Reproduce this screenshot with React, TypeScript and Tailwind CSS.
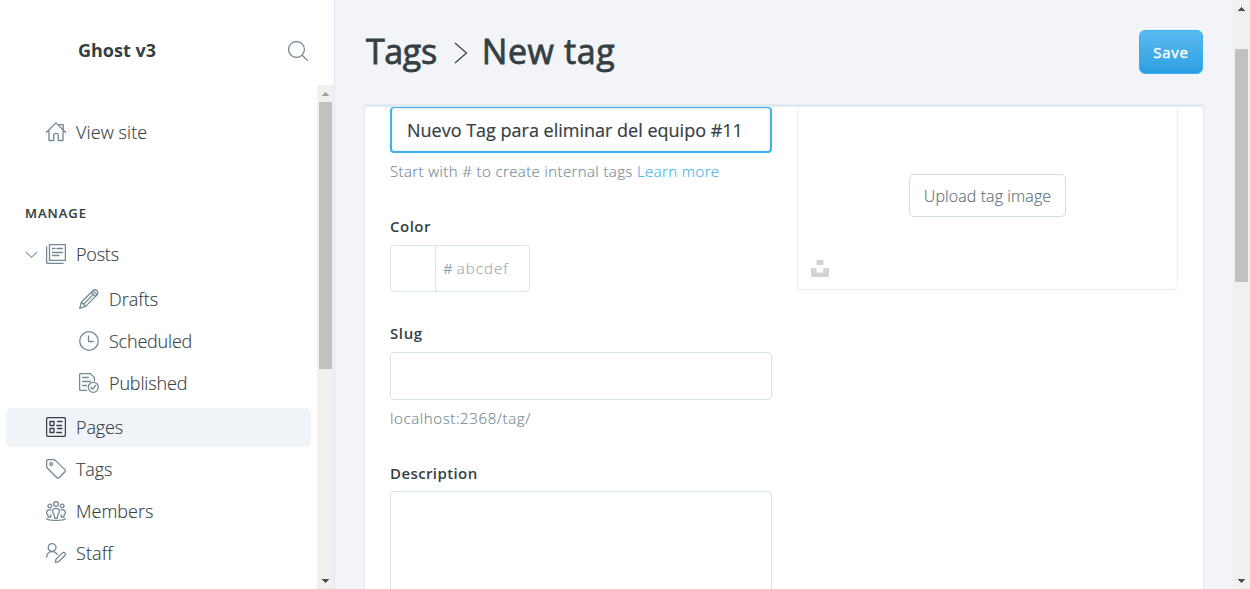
import type { ReactNode } from "react";

function Icon({ children, className = "text-[#738a94]" }: { children: ReactNode; className?: string }) {
  return (
    <svg
      viewBox="0 0 20 20"
      className={`h-5 w-5 shrink-0 fill-none stroke-[1.3] ${className}`}
      stroke="currentColor"
      strokeLinecap="round"
      strokeLinejoin="round"
    >
      {children}
    </svg>
  );
}

const HomeIcon = () => (
  <Icon>
    <path d="M.5 10.3 10 .9l9.5 9.4M3 9v9.5h4.7v-5.2c0-1.3.9-2 2.3-2s2.3.7 2.3 2v5.2H17V9M13.3 2.600h3.900v5" />
  </Icon>
);
const PostsIcon = () => (
  <Icon>
    <path d="M3.5.6h15.9v15.8H3.5zM.6 2.8v15.5c0 .7.4 1.1 1.1 1.1H17M6.5 4.500H9M11 4.500h5.500M6.500 8.500h10M6.500 11.500h6.500" />
  </Icon>
);
const PencilIcon = () => (
  <Icon>
    <path d="m.7 19.3 1.6-6L13.8 1.8c1.6-1.6 3-1.2 4.1-.1s1.5 2.6.1 4.2L6.6 17.4zM2.3 13.3l4.3 4.1M12.4 3.2l4.3 4.3M4.4 15.4 14.5 5.3M14 1.6l4.4 4.2" />
  </Icon>
);
const ClockIcon = () => (
  <Icon>
    <circle cx="10" cy="10" r="9.3" />
    <path d="M9.500 4.8v5.700h4.800" />
  </Icon>
);
const PublishedIcon = () => (
  <Icon>
    <path d="M7.6 17.4H1.7c-.7 0-1.1-.4-1.1-1.1V1.7C.6 1 1 .6 1.7.6h9.7l4 4v3.2M3.7 4.500h5.600M3.7 8.500h7.800M3.7 12.500h3.900" />
    <circle cx="14.3" cy="14.3" r="5" />
    <path d="m11.9 14.5 1.7 1.7 3-3.7" />
  </Icon>
);
const PagesIcon = () => (
  <Icon className="text-[#394047]">
    <path d="M.6 2.2C.6 1.2 1.2.6 2.2.6h15.6c1 0 1.6.6 1.6 1.6v15.6c0 1-.6 1.6-1.6 1.6H2.2c-1 0-1.6-.6-1.6-1.6zM4 4.5h4v4H4zM4 11.5h4v4H4zM11.500 4.5H16M10.8 8.500H15.500M11.500 11.500H16M10.8 15.5H15.500" />
  </Icon>
);
const TagIcon = () => (
  <Icon>
    <path d="M.6 2.2C.6 1.2 1.2.6 2.2.6h5.1c.8 0 1.4.3 2 .8l9.4 9c.9.9.9 1.8 0 2.6l-5.4 5.5c-.9.8-1.8.8-2.6 0L1.4 9.2c-.5-.6-.8-1.2-.8-2z" />
    <circle cx="5.2" cy="5.1" r="1.4" />
  </Icon>
);
const MembersIcon = () => (
  <Icon>
    <circle cx="10" cy="2.9" r="2.4" />
    <circle cx="3.8" cy="4.9" r="1.8" />
    <circle cx="16.2" cy="4.9" r="1.8" />
    <path d="M8.5 17 8 13c-1-.4-1.3-1.2-1.3-2.5 0-2 1.3-3.2 3.3-3.2s3.3 1.2 3.3 3.2c0 1.3-.3 2.1-1.3 2.5l-.5 4zM5.3 8.9c-2.5-.8-4.7.3-4.7 2.800 0 1.100.4 1.700 1.100 2l.5 2.300h2.300l.5-2.300M14.700 8.900c2.500-.8 4.700.3 4.700 2.800 0 1.100-.4 1.700-1.100 2l-.5 2.300h-2.300l-.5-2.300M.5 17.700c1.500 1.100 5 1.700 9.500 1.700s8-.6 9.500-1.700" />
  </Icon>
);
const StaffIcon = () => (
  <Icon>
    <circle cx="6.1" cy="4.5" r="3.9" />
    <path d="M.6 14.3c.2-3.5 2.5-5.6 5.6-5.6 2.2 0 3.9 1 4.9 2.7M9.3 19.3l.7-3.1 6.1-6.1c1-1 2-.9 2.8-.2s.8 1.800-.2 2.800l-6.300 6.100z" />
  </Icon>
);

function Arrow({ up = false, muted = false }: { up?: boolean; muted?: boolean }) {
  return (
    <div className="flex h-[17px] shrink-0 items-center justify-center">
      <svg width="7" height="4" className={muted ? "fill-[#a3a3a3]" : "fill-[#505050]"} shapeRendering="crispEdges">
        <path d={up ? "M3 0h1v1h1v1h1v1h1v1H0V3h1V2h1V1h1z" : "M0 0h7v1H6v1H5v1H4v1H3V3H2V2H1V1H0z"} />
      </svg>
    </div>
  );
}

function NavItem({ icon, label, track = "", active = false, open = false }: { icon: ReactNode; label: string; track?: string; active?: boolean; open?: boolean }) {
  return (
    <div className={`flex h-[39px] items-center rounded-[5px] pl-[19px] ${active ? "bg-[#f0f4f9]" : ""}`}>
      <div className="w-[21px]">
        {open && (
          <svg width="13" height="8" viewBox="0 0 13 8" className="fill-none stroke-[#8ea2ab] stroke-[1.2]">
            <path d="m1 1 5.500 5.500L12 1" />
          </svg>
        )}
      </div>
      <div className="-mt-px">{icon}</div>
      <span className={`ml-[10px] ${track}`}>{label}</span>
    </div>
  );
}

function SubItem({ icon, label, track = "" }: { icon: ReactNode; label: string; track?: string }) {
  return (
    <div className="flex h-[42px] items-center pl-[73px]">
      {icon}
      <span className={`ml-[10px] ${track}`}>{label}</span>
    </div>
  );
}

function Sidebar() {
  return (
    <aside className="flex h-full w-[335px] shrink-0 flex-col border-r border-[#e3e8f0] bg-white">
      <div className="flex h-[85px] shrink-0 items-start justify-between pt-[37px] pr-[26px] pl-[78px]">
        <span className="text-[18px] leading-[26px] font-bold">Ghost v3</span>
        <Icon className="mt-[4px] text-[#738a94]">
          <circle cx="8.5" cy="8.500" r="7.900" />
          <path d="m14.200 14.200 5.200 5.200" />
        </Icon>
      </div>
      <div className="flex min-h-0 flex-1">
        <nav className="flex w-[317px] flex-col pt-[28px] pr-[6px] pl-[6px] text-[18px] font-light [-webkit-text-stroke:0.15px]">
          <NavItem icon={<HomeIcon />} label="View site" track="tracking-[0.100px]" />
          <h2 className="mt-[51px] mb-[11px] pl-[19px] text-[13px] leading-[21px] font-semibold tracking-[1px]">MANAGE</h2>
          <NavItem icon={<PostsIcon />} label="Posts" track="tracking-[-0.200px]" open />
          <div className="mt-[4px] mb-[4px] flex flex-col">
            <SubItem icon={<PencilIcon />} label="Drafts" />
            <SubItem icon={<ClockIcon />} label="Scheduled" track="tracking-[-0.200px]" />
            <SubItem icon={<PublishedIcon />} label="Published" track="tracking-[-0.150px]" />
          </div>
          <div className="flex flex-col gap-[3px]">
            <NavItem icon={<PagesIcon />} label="Pages" track="tracking-[-0.150px]" active />
            <NavItem icon={<TagIcon />} label="Tags" track="tracking-[-0.100px]" />
            <NavItem icon={<MembersIcon />} label="Members" />
            <NavItem icon={<StaffIcon />} label="Staff" track="tracking-[0.100px]" />
          </div>
        </nav>
        <div className="flex w-[17px] flex-col bg-[#f0f0f0]">
          <Arrow up muted />
          <div className="mx-[2px] h-[267px] bg-[#c1c1c1]" />
          <div className="flex-1" />
          <Arrow />
        </div>
      </div>
    </aside>
  );
}

export default function App() {
  return (
    <div className="flex h-[589px] w-[1250px] overflow-hidden bg-[#f2f4f8] font-['Open_Sans','Noto_Sans',sans-serif] text-[#343f44]">
      <Sidebar />
      <main className="flex min-w-0 flex-1 flex-col pr-[29px] pl-[29px]">
        <header className="flex h-[105px] shrink-0 items-start justify-between pt-[30px] pl-[2px]">
          <h1 className="flex h-[44px] items-center text-[34px] [-webkit-text-stroke:0.8px]">
            <span className="-mt-px tracking-[-0.400px]">Tags</span>
            <svg width="14" height="22" viewBox="0 0 14 22" className="mt-[2px] mr-[14px] ml-[17px] fill-none stroke-[#343f44] stroke-[1.2]">
              <path d="m1 1 11.500 10L1 21" />
            </svg>
            <span className="-mt-px tracking-[0.600px]">New tag</span>
          </h1>
          <button className="mr-px h-[44px] w-[64px] rounded-[6px] border border-[#3eb0ef] bg-linear-to-b from-[#5abaf0] to-[#2b9fe2] text-[15px] tracking-[0.7px] text-white [-webkit-text-stroke:0.4px]">
            Save
          </button>
        </header>
        <section className="mx-px flex h-[484px] justify-between border-t-2 border-[#dfebf2] bg-white px-[25px] shadow-[0_0_2px_rgba(100,120,160,0.250)]">
          <div className="w-[382px]">
            <div className="flex h-[46px] items-center rounded-[4px] border-2 border-t border-[#3eb0ef] pt-[2px] pl-[15px] text-[18px] shadow-[inset_0_0_1px_#3eb0ef]">
              <span className="[-webkit-text-stroke:0.2px]">Nuevo Tag para eliminar del equipo #11</span>
            </div>
            <p className="mt-[7px] text-[15px] leading-[22px] font-light tracking-[0.390px] whitespace-nowrap text-[#738a94] [-webkit-text-stroke:0.15px]">
              <span>Start with # to create internal tags </span>
              <span className="text-[#3eb0ef]">Learn more</span>
            </p>
            <div className="mt-[33px] text-[15px] leading-[22px] font-semibold tracking-[0.500px]">Color</div>
            <div className="mt-[8px] flex h-[47px] w-[140px] items-center rounded-[4px] border border-[#d9e4eb]">
              <div className="h-full w-[45px] border-r border-[#d9e4eb]" />
              <span className="pl-[7px] text-[15px] text-[#8fa3ad]">#</span>
              <span className="pl-[4px] text-[15px] font-light tracking-[1.100px] text-[#97a9b2] [-webkit-text-stroke:0.15px]">abcdef</span>
            </div>
            <div className="mt-[30px] text-[15px] leading-[22px] font-semibold tracking-[0.600px]">Slug</div>
            <div className="mt-[8px] h-[48px] rounded-[4px] border border-[#d6e3ea]" />
            <p className="mt-[7px] text-[15px] leading-[22px] font-light tracking-[0.620px] text-[#738a94] [-webkit-text-stroke:0.15px]">localhost:2368/tag/</p>
            <div className="mt-[33px] text-[15px] leading-[22px] font-semibold tracking-[0.400px]">Description</div>
            <div className="mt-[7px] h-[98px] rounded-t-[4px] border border-b-0 border-[#d6e3ea]" />
          </div>
          <div className="relative flex h-[183px] w-[381px] items-center justify-center rounded-[4px] border border-t-0 border-[#e5eff5]">
            <button className="-mt-[5px] h-[43px] w-[157px] rounded-[5px] border border-[#d3dee4] bg-white pt-px text-[16px] font-light tracking-[0.100px] whitespace-nowrap text-[#5d7179] [-webkit-text-stroke:0.15px]">
              Upload tag image
            </button>
            <svg width="18" height="17" className="absolute bottom-[12px] left-[13px] fill-[#d3d3d3]">
              <path d="M5.500 0h6.800v5H5.500zM0 8h5.500v4.500h6.800V8H18v9H0z" />
            </svg>
          </div>
        </section>
      </main>
      <div className="flex w-[17px] shrink-0 flex-col bg-[#f0f0f0]">
        <Arrow up />
        <div className="mx-[2px] mt-[32px] h-[233px] bg-[#c1c1c1]" />
        <div className="flex-1" />
        <Arrow />
      </div>
    </div>
  );
}
